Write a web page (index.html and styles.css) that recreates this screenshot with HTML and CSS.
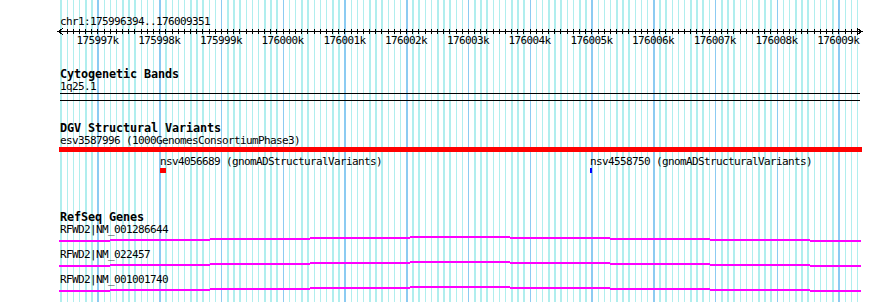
FILE: index.html
```html
<!DOCTYPE html>
<html lang="en">
<head>
    <meta charset="UTF-8">
    <title>chr1:175996394..176009351</title>
    <link rel="stylesheet" href="styles.css">
</head>
<body>
    <div class="panel">
        <div class="loc">chr1:175996394..176009351</div>

        <div class="ruler">
            <div class="axis">
                <svg class="axis-line" width="806" height="7" viewBox="0 0 806 7">
                    <path d="M1 3.5H804M6 0.5L1 3.5L6 6.5M800 0.5L805 3.5L800 6.5" fill="none" stroke="#000" stroke-width="1"/>
                </svg>
            </div>
            <div class="scale">
                <span style="left: 37.4px">175997k</span>
                <span style="left: 99.2px">175998k</span>
                <span style="left: 160.9px">175999k</span>
                <span style="left: 222.6px">176000k</span>
                <span style="left: 284.4px">176001k</span>
                <span style="left: 346.1px">176002k</span>
                <span style="left: 407.9px">176003k</span>
                <span style="left: 469.6px">176004k</span>
                <span style="left: 531.4px">176005k</span>
                <span style="left: 593.1px">176006k</span>
                <span style="left: 654.8px">176007k</span>
                <span style="left: 716.6px">176008k</span>
                <span style="left: 778.3px">176009k</span>
            </div>
        </div>

        <div class="track track-bands">
            <div class="track-title">Cytogenetic Bands</div>
            <div class="label">1q25.1</div>
            <div class="band"></div>
        </div>

        <div class="track track-dgv">
            <div class="track-title">DGV Structural Variants</div>
            <div class="label">esv3587996 (1000GenomesConsortiumPhase3)</div>
            <div class="sv-bar"></div>
            <div class="sv-row">
                <span class="sv-label" style="left: 100px">nsv4056689 (gnomADStructuralVariants)</span>
                <span class="sv-mark loss" style="left: 100px"></span>
                <span class="sv-label" style="left: 530px">nsv4558750 (gnomADStructuralVariants)</span>
                <span class="sv-mark gain" style="left: 530px"></span>
            </div>
        </div>

        <div class="track track-genes">
            <div class="track-title">RefSeq Genes</div>
            <div class="gene">
                <div class="label">RFWD2|NM_001286644</div>
                <svg class="gene-line" width="800" height="13">
                    <rect x="-1" y="4" width="51" height="2"/>
                    <rect x="50" y="3" width="100" height="2"/>
                    <rect x="150" y="2" width="100" height="2"/>
                    <rect x="250" y="1" width="100" height="2"/>
                    <rect x="350" y="0" width="100" height="2"/>
                    <rect x="450" y="1" width="100" height="2"/>
                    <rect x="550" y="2" width="100" height="2"/>
                    <rect x="650" y="3" width="100" height="2"/>
                    <rect x="750" y="4" width="51" height="2"/>
                </svg>
            </div>
            <div class="gene">
                <div class="label">RFWD2|NM_022457</div>
                <svg class="gene-line" width="800" height="13">
                    <rect x="-1" y="4" width="51" height="2"/>
                    <rect x="50" y="3" width="100" height="2"/>
                    <rect x="150" y="2" width="100" height="2"/>
                    <rect x="250" y="1" width="100" height="2"/>
                    <rect x="350" y="0" width="100" height="2"/>
                    <rect x="450" y="1" width="100" height="2"/>
                    <rect x="550" y="2" width="100" height="2"/>
                    <rect x="650" y="3" width="100" height="2"/>
                    <rect x="750" y="4" width="51" height="2"/>
                </svg>
            </div>
            <div class="gene">
                <div class="label">RFWD2|NM_001001740</div>
                <svg class="gene-line" width="800" height="13">
                    <rect x="-1" y="4" width="51" height="2"/>
                    <rect x="50" y="3" width="100" height="2"/>
                    <rect x="150" y="2" width="100" height="2"/>
                    <rect x="250" y="1" width="100" height="2"/>
                    <rect x="350" y="0" width="100" height="2"/>
                    <rect x="450" y="1" width="100" height="2"/>
                    <rect x="550" y="2" width="100" height="2"/>
                    <rect x="650" y="3" width="100" height="2"/>
                    <rect x="750" y="4" width="51" height="2"/>
                </svg>
            </div>
        </div>
    </div>
</body>
</html>
```

FILE: styles.css
```css
body { margin: 0; background: #fff; color: #000; font-family: "DejaVu Sans Mono", "Liberation Mono", monospace; font-size: 11px; letter-spacing: -0.62px; line-height: 12px; }

/* 800px = 12957 bp, minor grid every 100 bp, major every 1 kb */
.panel {
    width: 800px; height: 302px; margin-left: 60px; padding-top: 16px; box-sizing: border-box;
    background-image:
        repeating-linear-gradient(to right, transparent 0 37.4px, #8ccbf2 37.4px 38.9px, transparent 38.9px 61.743px),
        repeating-linear-gradient(to right, transparent 0 0.37px, #b0eeee 0.37px 1.87px, transparent 1.87px 6.1743px);
}

.loc { height: 12px; white-space: nowrap; }

.ruler { height: 19px; }
.axis {
    height: 7px;
    background: repeating-linear-gradient(to right, transparent 0 0.37px, #000 0.37px 1.37px, transparent 1.37px 6.1743px) 0 1px / 800px 5px no-repeat;
}
.axis-line { display: block; margin-left: -3px; shape-rendering: crispEdges; }
.scale { position: relative; height: 12px; }
.scale span { position: absolute; top: 0; transform: translateX(-50%); white-space: nowrap; }

.track { margin-top: 21px; }
.track-genes { margin-top: 37px; }
.track-title { height: 13px; font-size: 11.8px; letter-spacing: -0.1px; line-height: 13px; font-weight: bold; white-space: nowrap; }
.label { height: 12px; white-space: nowrap; }

.band { height: 6px; border-top: 1px solid #000; border-bottom: 1px solid #000; }

.sv-bar { height: 5px; margin: 0 -2px 0 -1px; background: #f00; }
.sv-row { position: relative; height: 18px; margin-top: 4px; }
.sv-label { position: absolute; top: 0; white-space: nowrap; }
.sv-mark { position: absolute; top: 12px; height: 5px; }
.sv-mark.loss { width: 6px; background: #f00; }
.sv-mark.gain { width: 2px; background: #00f; }

.gene { height: 25px; }
.gene-line { display: block; overflow: visible; fill: #f0f; shape-rendering: crispEdges; }
```
